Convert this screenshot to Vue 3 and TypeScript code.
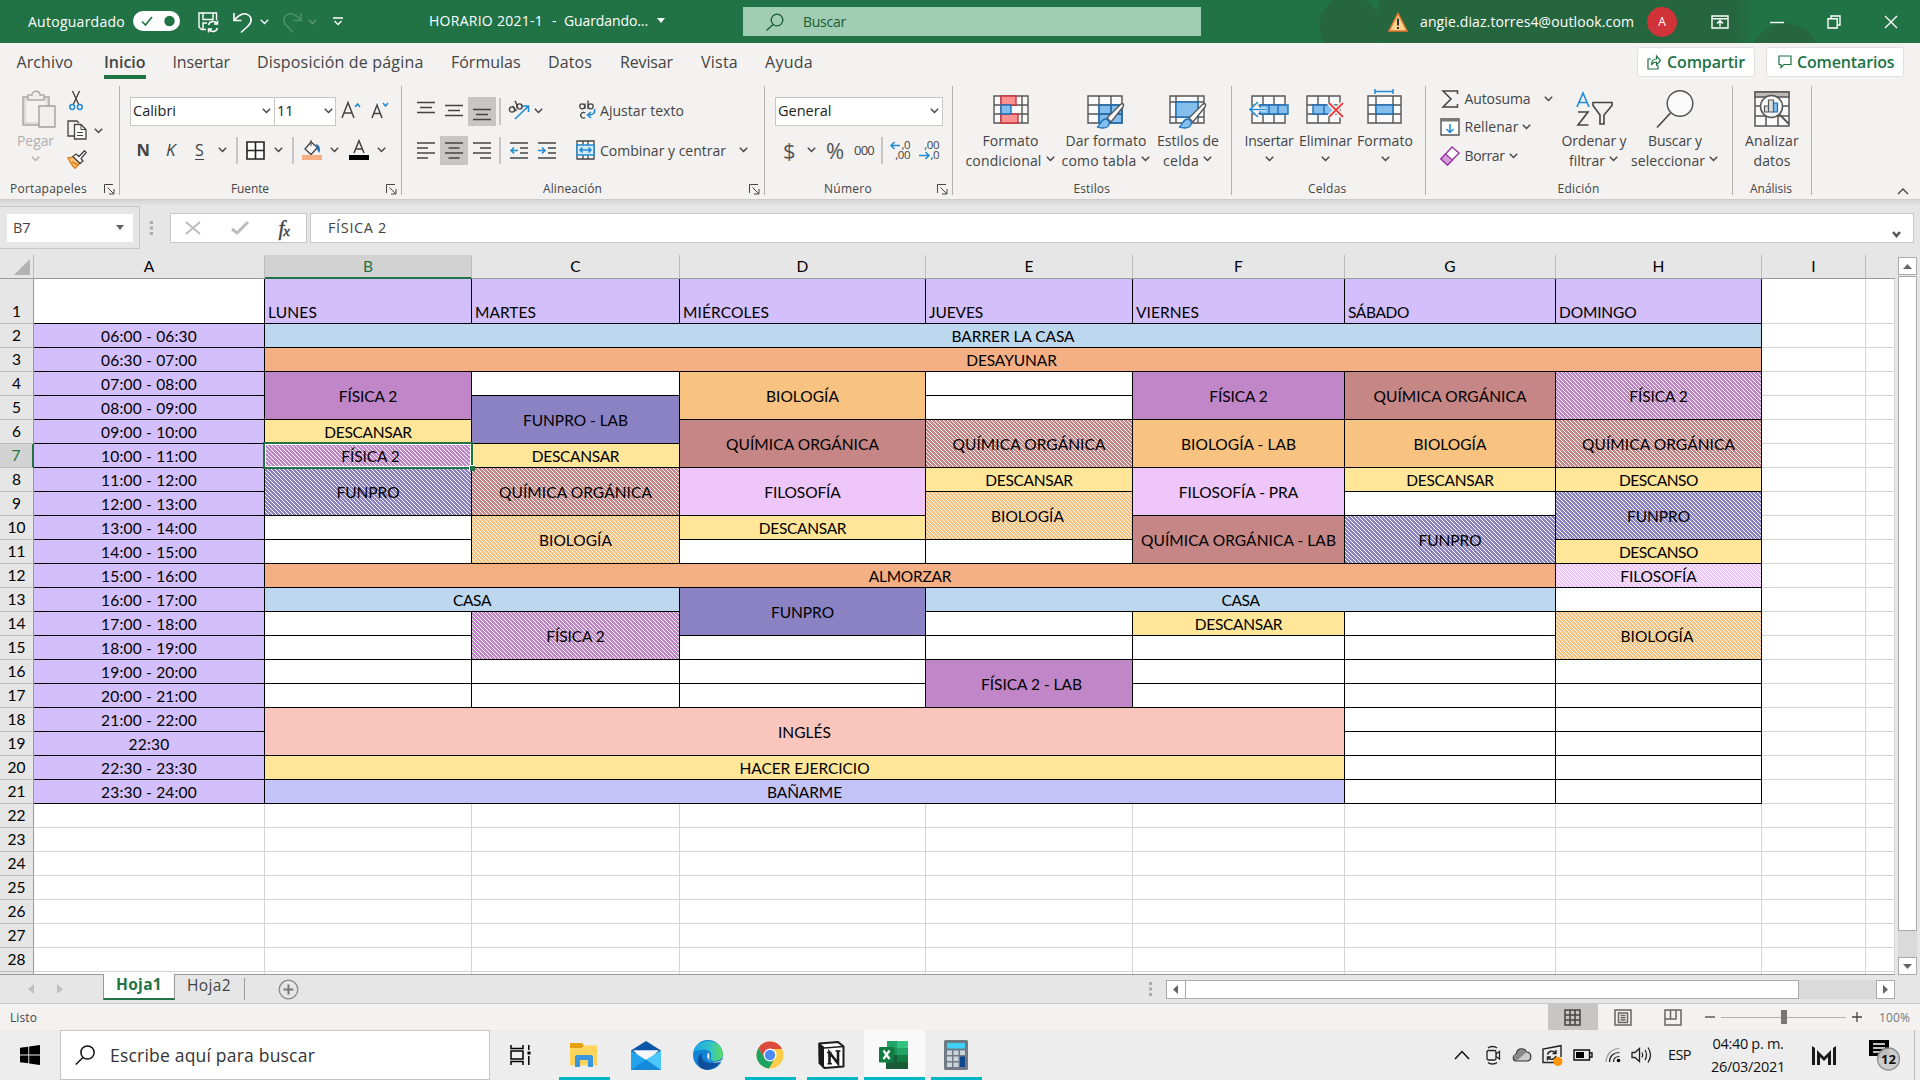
<script setup lang="ts">
import type { Directive } from 'vue'

interface Item {
  x: number
  w: number
  icon?: string
  text?: string
  cls?: string
  combo?: boolean
}
interface Line { h: number; items: Item[] }
interface Block { x: number; w: number; lines?: Line[]; icon?: string; top?: string; low?: string; fitTop?: number; fitLow?: number; chev?: boolean }
interface Group { x: number; w: number; label: string; lx: number; lw: number; launcher?: number; blocks: Block[] }
interface Glyph { w: number; h: number; body: string }

/* Tracks a label so that it takes exactly the given width. */
const vFit: Directive<HTMLElement, number | undefined> = {
  mounted(el, { value }) {
    if (!value || !el.textContent) return
    const range = document.createRange()
    range.selectNodeContents(el)
    const natural = range.getBoundingClientRect().width
    const step = (value - natural) / el.textContent.length
    el.style.letterSpacing = `${step.toFixed(3)}px`
  },
}

/* Turns left edges into the gaps between neighbours of a flex row. */
function lay<T extends { x: number; w: number }>(items: T[], origin: number) {
  let edge = origin
  return items.map((it) => {
    const gap = it.x - edge
    edge = it.x + it.w
    return { ...it, box: { marginLeft: `${gap}px`, width: `${it.w}px` } }
  })
}

const D = 'fill="none" stroke="#444"'
const B = 'fill="none" stroke="#1e8bd4"'
const icons: Record<string, Glyph> = {
  chev: { w: 9, h: 6, body: `<path ${D} stroke-width="1.4" d="M.8 .8l3.7 3.7L8.200 .8"/>` },
  chevw: { w: 9, h: 6, body: '<path fill="none" stroke="#fff" stroke-width="1.3" d="M.8 .8l3.7 3.7L8.200 .8"/>' },
  chevg: { w: 9, h: 6, body: '<path fill="none" stroke="#5b9a77" stroke-width="1.3" d="M.8 .8l3.7 3.7L8.200 .8"/>' },
  chevd: { w: 9, h: 6, body: '<path fill="none" stroke="#b1afad" stroke-width="1.3" d="M.8 .8l3.7 3.7L8.200 .8"/>' },
  caret: { w: 12, h: 8, body: `<path ${D} stroke-width="1.4" d="M1 7l5-5 5 5"/>` },
  launch: { w: 11, h: 11, body: `<path ${D} d="M.5 9V.5H9M3.500 3.500l6 6M10 5v5H5"/>` },
  toggle: { w: 47, h: 20, body: '<rect width="47" height="20" rx="10" fill="#fff"/><path d="M9 10.500l3.500 3.500 6.500-8" fill="none" stroke="#217346" stroke-width="1.700"/><circle cx="36.500" cy="10" r="5.200" fill="#217346"/>' },
  save: { w: 21, h: 21, body: '<path fill="none" stroke="#fff" stroke-width="1.400" d="M8 17.500H3.500L1 15V1h17.500v7M5 1v6.500h10V1M5 17v-6h4"/><path fill="none" stroke="#fff" stroke-width="1.500" d="M10.500 13a4.800 4.800 0 0 1 8.500-1.500M19.500 8.500v3.500H16M19.500 16a4.800 4.800 0 0 1-8.500 1.500M10.500 20.500V17H14"/>' },
  undo: { w: 20, h: 21, body: '<path fill="none" stroke="#fff" stroke-width="1.600" d="M1 1v7.500h7.500M1.500 8C6 2 12 0 16 3.500s2 8-2 11.500l-6 5.500"/>' },
  redo: { w: 20, h: 21, body: '<path fill="none" stroke="#4d9069" stroke-width="1.500" d="M19 1v7.500h-7.500M18.500 8C14 2 8 0 4 3.500s-2 8 2 11.500l5 5.500"/>' },
  qat: { w: 10, h: 9, body: '<path fill="none" stroke="#fff" stroke-width="1.300" d="M0 1h10M1.500 4L5 7.500 8.500 4"/>' },
  tri: { w: 8, h: 5, body: '<path fill="#fff" d="M0 0h8L4 5z"/>' },
  warn: { w: 20, h: 20, body: '<path fill="#fbd28b" stroke="#e8762c" stroke-width="1.500" d="M10 1.500L19 19H1z"/><path stroke="#333" stroke-width="2" d="M10 6.500v7M10 15v2"/>' },
  ribbon: { w: 18, h: 14, body: '<path fill="none" stroke="#fff" stroke-width="1.400" d="M1 1h16v12H1zM1 3.800h16M9 11.500V6M6 8.500l3-3 3 3"/>' },
  min: { w: 14, h: 14, body: '<path stroke="#fff" stroke-width="1.400" d="M0 7.500h14"/>' },
  restore: { w: 14, h: 14, body: '<path fill="none" stroke="#fff" stroke-width="1.400" d="M1 3.800h9.200V13H1zM4 3.500V1h9v9h-2.500"/>' },
  close: { w: 14, h: 14, body: '<path stroke="#fff" stroke-width="1.400" d="M1 1l12 12M13 1L1 13"/>' },
  share: { w: 14, h: 16, body: '<path fill="none" stroke="#217346" stroke-width="1.200" d="M4 5H1v10h10v-4M4.500 11c0-4 2-6 5-6V2l4 4.500-4 4.500V8c-2.500 0-4 1-5 3z"/>' },
  comment: { w: 14, h: 14, body: '<path fill="none" stroke="#217346" stroke-width="1.200" d="M1 1h12v8.500H6L3 12.500v-3H1z"/>' },
  glassg: { w: 18, h: 18, body: '<circle cx="11" cy="7" r="5.800" fill="none" stroke="#185c37" stroke-width="1.300"/><path stroke="#185c37" stroke-width="1.300" d="M7 11.500L.5 17.500"/>' },
  paste: { w: 34, h: 38, body: '<g transform="translate(3 0)"><path fill="#dcdbd9" stroke="#aaa" stroke-width="1.500" d="M1 7h26v28H1z"/><path fill="#f3f2f1" d="M4 10h20v22H4z"/><path fill="#eee" stroke="#aaa" stroke-width="1.300" d="M6 10V5h4c0-5 8-5 8 0h4v5z"/><path fill="#f0efee" stroke="#a0a0a0" stroke-width="1.400" d="M17 16h16v21H17z"/></g>' },
  cut: { w: 14, h: 20, body: `<path ${D} stroke-width="1.400" d="M3.500 0l6 13M10.500 0l-6 13"/><circle ${B} stroke-width="1.500" cx="3.200" cy="16" r="2.400"/><circle ${B} stroke-width="1.500" cx="10.800" cy="16" r="2.400"/>` },
  copy: { w: 20, h: 20, body: `<path ${D} stroke-width="1.300" d="M7 16H1V1h9l2 2"/><path fill="#fafafa" stroke="#444" stroke-width="1.300" d="M7.500 4.500H14l5 5V19H7.500z"/><path ${D} d="M14 4.500v5h5M10 12.500h6M10 15.500h6"/>` },
  brush: { w: 20, h: 19, body: '<path fill="#f9c67b" stroke="#e07b1a" stroke-width="1.400" d="M1 8l5-1 7 6-5 5.300C5 16 3 12 1 8zM5 12l6 3"/><path fill="#fff" stroke="#444" stroke-width="1.300" d="M6 6.500L9 4l3 2.500L17.500 .8l1.700 1.700L14 8.500l2 2.500-3 2.500z"/>' },
  grow: { w: 20, h: 18, body: `<path ${D} stroke-width="1.500" d="M1 17L7 1.500 13 17M3 12h8"/><path ${B} stroke-width="1.500" d="M14 6l2.500-3L19 6"/>` },
  shrink: { w: 19, h: 18, body: `<path ${D} stroke-width="1.500" d="M1 17L6 4l5 13M2.800 12.500h6.500"/><path ${B} stroke-width="1.500" d="M12 2l2.500 3L17 2"/>` },
  vsep: { w: 1, h: 27, body: '<path stroke="#c8c6c4" stroke-width="2" d="M0 0v27"/>' },
  borders: { w: 19, h: 19, body: '<path fill="#fff" stroke="#222" stroke-width="1.600" d="M1 1h17v17H1zM9.500 1v17M1 9.500h17"/>' },
  fill: { w: 20, h: 20, body: `<path fill="#fafafa" stroke="#444" stroke-width="1.300" d="M9 2L3 9l6 5.500L15.500 7.500z"/><path ${D} d="M9 0v6"/><path fill="#1f6fb5" d="M14 4c4 1 4.500 5 3.500 9-1-1-2.500-3-2.500-5z"/><path fill="#f4b084" d="M0 15h20v5H0z"/>` },
  fcolor: { w: 20, h: 20, body: `<path ${D} stroke-width="1.500" d="M5 13L10 .8 15 13M6.500 9h7"/><path d="M0 15h20v5H0z"/>` },
  atop: { w: 18, h: 19, body: `<path ${D} stroke-width="1.500" d="M0 4.500h18M3 9.500h12M0 14.500h18"/>` },
  al: { w: 18, h: 19, body: `<path ${D} stroke-width="1.500" d="M0 2h18M0 7h11M0 12h18M0 17h11"/>` },
  ac: { w: 18, h: 19, body: `<path ${D} stroke-width="1.500" d="M0 2h18M3.500 7h11M0 12h18M3.500 17h11"/>` },
  ar: { w: 18, h: 19, body: `<path ${D} stroke-width="1.500" d="M0 2h18M7 7h11M0 12h18M7 17h11"/>` },
  orient: { w: 21, h: 20, body: `<path ${B} stroke-width="1.600" d="M7 19L20 6.500M14 6h6.500v6"/><g ${D} stroke-width="1.400"><circle cx="4" cy="9.500" r="2.600"/><path d="M4.500 6l4 5"/><circle cx="11.500" cy="6.500" r="2.600"/><path d="M7 .8l3 7"/></g>` },
  wrap: { w: 17, h: 20, body: `<g ${D} stroke-width="1.300"><circle cx="3.200" cy="6.300" r="2.500"/><path d="M6 3.500V9M9 .5V9M6.200 13a2.800 2.800 0 1 0 0 4.500"/><circle cx="11.700" cy="6.300" r="2.500"/></g><path ${B} stroke-width="1.600" d="M15.500 9c1 4-1 6-6.500 6M12 12l-3.500 3 3.500 3"/>` },
  dedent: { w: 18, h: 17, body: `<path ${D} stroke-width="1.500" d="M0 1h18M10 6h8M10 11h8M0 16h18"/><path ${B} stroke-width="1.500" d="M8 8.500H1M4 5.500l-3 3 3 3"/>` },
  indent: { w: 18, h: 17, body: `<path ${D} stroke-width="1.500" d="M0 1h18M10 6h8M10 11h8M0 16h18"/><path ${B} stroke-width="1.500" d="M0 8.500h7M4 5.500l3 3-3 3"/>` },
  merge: { w: 19, h: 20, body: `<path fill="#fafafa" stroke="#444" stroke-width="1.300" d="M1 1h17v18H1zM7 1v4M12 1v4M7 15v4M12 15v4"/><path fill="#d7ebfa" stroke="#1e8bd4" stroke-width="1.500" d="M1 5h17v10H1zM4 10h11M6.500 7.500L4 10l2.500 2.500M12.500 7.500L15 10l-2.500 2.500"/>` },
  decup: { w: 20, h: 20, body: `<path ${B} stroke-width="1.500" d="M10 5.500H1M4.500 2L1 5.500 4.500 9"/>` },
  decdn: { w: 20, h: 20, body: `<path ${B} stroke-width="1.500" d="M0 15.500h10M6.500 12l3.500 3.500L6.500 19"/>` },
  cond: { w: 36, h: 40, body: '<path fill="#fafafa" stroke="#555" stroke-width="1.400" d="M1 7h34v27H1zM1 16h34M1 25h34M8 7v27M29 7v27"/><path fill="#ff9090" stroke="#d13438" stroke-width="1.400" d="M8 7h15v9H8zM8 25h17v9H8z"/><path fill="#83beec" stroke="#1e6fb8" stroke-width="1.400" d="M8 16h10v9H8z"/>' },
  table: { w: 38, h: 40, body: '<path fill="#fafafa" d="M1 7h34v27H1z"/><path fill="#83beec" d="M12 16h24v18H12z"/><path fill="none" stroke="#555" stroke-width="1.400" d="M1 7h34v27H1zM1 16h34M1 25h34M12 7v27M24 7v27"/><path fill="none" stroke="#1e6fb8" stroke-width="1.300" d="M12 16h23v18H12zM12 25h23M24 16v18"/><path fill="#fff" stroke="#555" stroke-width="1.400" d="M20 29L34 15c3-1 3 1 2 3L24 33z"/><path fill="#83beec" stroke="#1e6fb8" stroke-width="1.300" d="M10 38c3 0 3-8 9-8 6 3 3 9-3 9-2 0-4 0-6-1z"/>' },
  style: { w: 38, h: 40, body: '<path fill="#fafafa" stroke="#555" stroke-width="1.400" d="M1 7h34v27H1zM1 13h34M1 28h34M7 7v27M29 7v27"/><path fill="#83beec" stroke="#1e6fb8" stroke-width="1.400" d="M7 13h22v15H7z"/><path fill="#fff" stroke="#555" stroke-width="1.400" d="M20 29L34 15c3-1 3 1 2 3L24 33z"/><path fill="#83beec" stroke="#1e6fb8" stroke-width="1.300" d="M10 38c3 0 3-8 9-8 6 3 3 9-3 9-2 0-4 0-6-1z"/>' },
  insert: { w: 41, h: 40, body: '<path fill="#fafafa" stroke="#555" stroke-width="1.400" d="M3 7h33v27H3zM3 16h33M3 25h33M14 7v27M25 7v27"/><path fill="#83beec" stroke="#1e6fb8" stroke-width="1.400" d="M11 16h28v9H11zM20 16v9M29 16v9"/><path fill="none" stroke="#fff" stroke-width="3.500" d="M17 20.500H3M10 13l-8 7.500 8 7.500"/><path fill="none" stroke="#1e8bd4" stroke-width="1.600" d="M17 20.500H2M9 13l-8 7.500L9 28"/>' },
  remove: { w: 39, h: 40, body: '<path fill="#fafafa" stroke="#555" stroke-width="1.400" d="M1 7h33v27H1zM1 16h33M1 25h33M12 7v27M23 7v27"/><path fill="#83beec" stroke="#1e6fb8" stroke-width="1.400" d="M7 16h21v9H7zM18 16v9"/><path stroke="#f3f2f1" stroke-width="5" d="M23 14l14 14M37 14L23 28"/><path stroke="#e8413f" stroke-width="1.800" d="M23 14l14 14M37 14L23 28"/>' },
  format: { w: 36, h: 40, body: '<path fill="#fafafa" stroke="#555" stroke-width="1.400" d="M1 7h33v27H1zM1 16h33M1 25h33M9 7v27M26 7v27"/><path fill="#83beec" stroke="#1e6fb8" stroke-width="1.400" d="M9 16h17v9H9z"/><path fill="none" stroke="#1e8bd4" stroke-width="1.500" d="M8 2.500h18M8 0v5M26 0v5"/>' },
  sigma: { w: 17, h: 18, body: `<path ${D} stroke-width="1.500" d="M15.500 4V1H1l8 8-8 8h14.500v-3"/>` },
  down: { w: 20, h: 18, body: `<path fill="#fff" stroke="#555" stroke-width="1.400" d="M1 1h18v16H1z"/><path stroke="#777" stroke-width="2" d="M1 2.500h18"/><path ${B} stroke-width="1.500" d="M10 6v8.500M6.500 11l3.500 3.500L13.500 11"/>` },
  eraser: { w: 20, h: 20, body: '<path fill="#fff" stroke="#9a3aa5" stroke-width="1.500" d="M12 1l7 6L7.500 19l-6.500-6z"/><path fill="#d59ddb" stroke="#9a3aa5" stroke-width="1.300" d="M5.500 8l7 6L7.500 19l-6.500-6z"/>' },
  sort: { w: 37, h: 40, body: `<path ${B} stroke-width="1.600" d="M1 18L7 4l6 14M3 13.500h8"/><path ${D} stroke-width="1.600" d="M2 23h10L2 36h10.500M17 13.500h19v3L28 26v9h-4v-9l-7-9.500z"/>` },
  find: { w: 38, h: 40, body: '<circle cx="24" cy="14.500" r="12.800" fill="#fafafa" stroke="#555" stroke-width="1.500"/><path stroke="#444" stroke-width="1.600" d="M14.500 24L1 38.500"/>' },
  analyze: { w: 36, h: 40, body: '<path fill="#fafafa" stroke="#555" stroke-width="1.500" d="M1 3h34v34H1zM1 17h34M1 27h34M12 8v29M24 8v29"/><path fill="#bbb" stroke="#555" stroke-width="1.300" d="M1 3h34v5H1z"/><circle cx="17.500" cy="17.500" r="11" fill="#fafafa" stroke="#555" stroke-width="1.500"/><path stroke="#555" stroke-width="1.800" d="M25 25l10 10"/><path fill="#ddd" stroke="#555" stroke-width="1.200" d="M10.500 17h4v6h-4zM14.500 11h5v12h-5z"/><path fill="#83beec" stroke="#1e6fb8" stroke-width="1.200" d="M19.500 14h4v9h-4z"/>' },
  tril: { w: 6, h: 10, body: '<path fill="#c0c0c0" d="M6 0v10L0 5z"/>' },
  trir: { w: 6, h: 10, body: '<path fill="#c0c0c0" d="M0 0v10l6-5z"/>' },
  dtril: { w: 5, h: 9, body: '<path fill="#666" d="M5 0v9L0 4.500z"/>' },
  dtrir: { w: 5, h: 9, body: '<path fill="#666" d="M0 0v9l5-4.500z"/>' },
  dtriu: { w: 9, h: 5, body: '<path fill="#666" d="M0 5h9L4.500 0z"/>' },
  dtrid: { w: 9, h: 5, body: '<path fill="#666" d="M0 0h9L4.500 5z"/>' },
  add: { w: 21, h: 21, body: '<circle cx="10.500" cy="10.500" r="9.300" fill="none" stroke="#888" stroke-width="1.300"/><path stroke="#777" stroke-width="2" d="M10.500 5.500v10M5.500 10.500h10"/>' },
  dots: { w: 3, h: 14, body: '<path fill="#aaa" d="M0 0h3v3H0zM0 5.500h3v3H0zM0 11h3v3H0z"/>' },
  vnorm: { w: 17, h: 17, body: '<path fill="none" stroke="#444" stroke-width="1.500" d="M1 1h15v15H1zM1 6h15M1 11h15M6 1v15M11 1v15"/>' },
  vpage: { w: 18, h: 17, body: '<path fill="none" stroke="#666" stroke-width="1.500" d="M1 1h16v15H1zM4.500 4h9v9.500h-9zM6.500 6.500h5M6.500 8.800h5M6.500 11h5"/>' },
  vbreak: { w: 18, h: 17, body: '<path fill="none" stroke="#666" stroke-width="1.500" d="M1 1h16v15H1zM1 10h11V1M6.500 1v9"/>' },
  minus: { w: 10, h: 10, body: `<path ${D} stroke-width="1.300" d="M0 5h10"/>` },
  plus: { w: 10, h: 10, body: `<path ${D} stroke-width="1.300" d="M0 5h10M5 0v10"/>` },
  slider: { w: 125, h: 14, body: '<path stroke="#b0b0b0" d="M0 7.500h125"/><path fill="#777" d="M60 0h6v14h-6z"/>' },
  win: { w: 20, h: 20, body: '<path d="M0 2.800L8.300 1.700v7.900H0zM9.200 1.600L20 0v9.600H9.200zM0 10.400h8.300v7.900L0 17.200zM9.200 10.400H20V20L9.200 18.400z"/>' },
  glass: { w: 20, h: 20, body: '<circle cx="12.500" cy="7.500" r="6.600" fill="none" stroke="#111" stroke-width="1.500"/><path stroke="#111" stroke-width="1.500" d="M8 12.500L.8 19.500"/>' },
  taskview: { w: 21, h: 20, body: '<path fill="none" stroke="#000" stroke-width="1.500" d="M1 0v3.500h12V0M1 6h12v8H1zM1 20v-3.500h12V20M18.800 0v5M18.800 11v9"/><path d="M17.500 6.500h3v3h-3z"/>' },
  explorer: { w: 28, h: 24, body: '<path fill="#e5a00d" d="M0 0h12l2 2.500L12 5H0z"/><path fill="#ffd35c" d="M0 5h12l2-2.500h13V22.500H0z"/><path fill="#3a96dd" d="M5 14q0-2 2-2h14q2 0 2 2v10h-5v-7h-8v7H5z"/>' },
  mail: { w: 30, h: 29, body: '<path fill="#0a57a8" d="M0 9.500L15 0l15 9.500v3H0z"/><path fill="#f4f6f8" d="M2 9.500h26L15 20z"/><path fill="#22a5ec" d="M0 9.500L15 19 30 9.500V29H0z"/><path fill="#4cc8f8" d="M30 9.500L15 19l15 10z"/><path fill="#1380d6" d="M0 29l15-10.500L30 29z" opacity=".75"/><path fill="#f4f6f8" d="M3 9.500h24L15 18z"/>' },
  edge: { w: 30, h: 30, body: '<defs><linearGradient id="eg"><stop offset="0" stop-color="#1ba3e8"/><stop offset=".55" stop-color="#2fc4c8"/><stop offset="1" stop-color="#62dd5a"/></linearGradient></defs><circle cx="15" cy="15" r="15" fill="#1283d4"/><path fill="url(#eg)" d="M.5 12C3-2 28-4 30 14c0 5-4 7-9 7-3 0-4-2-3-4 2-6-5-9-10-7-4 0-6 1-7.500 2z"/><path fill="#104f9c" d="M9 13c-2 9 8 14 19 7-4 9-14 12-20 8-5-5-4-12 1-15z"/><path fill="#ededed" d="M15.500 12.500c-3 3-1 9 5.500 9.500 4 0 6-1 8-2l1.500-2v3l-2 .5c-4 2-10 1-12-1.500-1-2 1-4-1-7.500z"/>' },
  chrome: { w: 28, h: 28, body: '<circle cx="14" cy="14" r="13.500" fill="#ffcd46"/><path fill="#dd4b3e" d="M2.300 7.200A13.500 13.500 0 0 1 26 8H14L8.500 17.500z"/><path fill="#1da362" d="M2.300 7.200A13.500 13.500 0 0 0 13 27.500L19 17l-10.500 0z"/><circle cx="14" cy="14" r="6.500" fill="#fff"/><circle cx="14" cy="14" r="5.200" fill="#4c8bf5"/>' },
  notion: { w: 27, h: 28, body: '<path fill="#fff" stroke="#1b1b1b" stroke-width="2" stroke-linejoin="round" d="M1.200 2.500L20 1l5.500 4.500v20L6.500 27l-5-5z"/><path fill="#1b1b1b" d="M1.200 2.500L6 7v20l-4.800-5z"/><path fill="none" stroke="#1b1b1b" stroke-width="1.500" d="M1.500 3L6.500 7l19-1.500"/><path fill="none" stroke="#1b1b1b" stroke-width="2.600" d="M11.500 23V11.500L20 22.500V9.500"/><path stroke="#1b1b1b" stroke-width="1.400" d="M9 11.500h4.500M9.500 22.800h4.500M17.500 10h5"/>' },
  excel: { w: 29, h: 28, body: '<path fill="#21a366" d="M8 0h10v7H8z"/><path fill="#33c481" d="M18 0h11v7H18z"/><path fill="#107c41" d="M8 14h21v7H8z"/><path fill="#21a366" d="M18 7h11v7H18z"/><path fill="#1a9256" d="M8 7h10v7H8z"/><path fill="#185c37" d="M7 21h22v7H7zM7 14h11v7H7z"/><rect y="6" width="15" height="15.500" rx="1.200" fill="#107c41"/><path stroke="#fff" stroke-width="2.200" d="M4.500 9.500l6 8.500M10.500 9.500l-6 8.500"/>' },
  calc: { w: 24, h: 30, body: '<rect width="24" height="30" rx="1.500" fill="#6f7a85"/><path fill="#3fd0f8" d="M3 3h18v5.500H3z"/><path fill="#ccd3da" d="M3 10.500h5v4.500H3zM9.500 10.500h5v4.500h-5zM16 10.500h5v4.500h-5zM3 16.500h5V21H3zM9.500 16.500h5V21h-5zM3 22.500h5V27H3zM9.500 22.500h5V27h-5z"/><path fill="#10488f" d="M16 16.500h5V27h-5z"/>' },
  up: { w: 16, h: 10, body: '<path fill="none" stroke="#111" stroke-width="1.500" d="M1 9l7-7.500L15 9"/>' },
  cam: { w: 15, h: 18, body: '<rect x="1" y="4.500" width="9" height="9.500" rx="1.500" fill="none" stroke="#222" stroke-width="1.300"/><path fill="none" stroke="#222" stroke-width="1.300" d="M10 8l3.500-2.500v7.500L10 10.500M2 2c2-2 7-2 9 0M2 16.500c2 2 7 2 9 0"/>' },
  cloud: { w: 20, h: 14, body: '<path fill="#ccc" stroke="#333" stroke-width="1.200" d="M4.500 13C.5 13 0 7.500 4 6.500 5-.5 13-.5 14.500 4c5 0 6 8 1 9z"/><path fill="#888" d="M1.500 9C1 7 3 6.500 4.500 6.500 6 0 13 0 14 4.500L5 12.500C3 13 1.500 11 1.500 9z"/>' },
  update: { w: 21, h: 21, body: '<path fill="none" stroke="#222" stroke-width="1.400" d="M12 17.500H1V4l18-3.300V12"/><path fill="none" stroke="#222" stroke-width="1.400" d="M5.500 9.500a4.500 4.500 0 0 1 8-1.500M14 5v3.500h-3.500M14 11a4.500 4.500 0 0 1-8 1.500M5.500 15.500V12H9"/><circle cx="16" cy="16.500" r="4.500" fill="#ff9500"/>' },
  battery: { w: 20, h: 12, body: '<path fill="none" stroke="#111" stroke-width="1.400" d="M1 1h15.500v10H1zM17 4h2v4h-2"/><path d="M3 3h8v6H3z"/>' },
  wifi: { w: 16, h: 17, body: '<path fill="none" stroke="#999" stroke-width="1.200" d="M1 15C1.500 7 7 1.500 14.500 1.500"/><path fill="none" stroke="#222" stroke-width="1.200" d="M4.500 15c0-6 4-9.500 10-9.500M8.500 15c0-3.500 2.500-5.500 6-5.500"/><circle cx="13.500" cy="13.500" r="1.800"/>' },
  volume: { w: 21, h: 18, body: '<path fill="none" stroke="#222" stroke-width="1.300" d="M1 6.500h3L8.500 2.500v13L4 11.500H1zM11 6.500q1.500 2.500 0 5M14 4q3 5 0 10M17 1.500q5 7.500 0 15"/>' },
  mm: { w: 24, h: 19, body: '<path fill="#1a1a1a" d="M0 0l3 2v17H0zM24 0l-3 2v17h3zM5 4l7 7 7-7v15h-3v-8l-4 4-4-4v8H5z"/>' },
  notif: { w: 32, h: 30, body: '<path d="M0 0h20v16h-7l-4 4v-4H0z"/><path stroke="#fff" stroke-width="1.500" d="M4 4h12M4 8h12M4 12h8"/><circle cx="19.500" cy="19" r="11" fill="#ccc" stroke="#888" stroke-width="1.300" opacity=".93"/>' },
}

const title = lay<Item>([
  { x: 28, w: 97, text: 'Autoguardado', cls: 'wt' },
  { x: 133, w: 47, icon: 'toggle', cls: 'up1' },
  { x: 198, w: 21, icon: 'save', cls: 'dn2' },
  { x: 233, w: 20, icon: 'undo', cls: 'dn2' },
  { x: 260, w: 9, icon: 'chevw' },
  { x: 282, w: 20, icon: 'redo', cls: 'dn2' },
  { x: 308, w: 9, icon: 'chevg' },
  { x: 333, w: 10, icon: 'qat' },
  { x: 429, w: 114, text: 'HORARIO 2021-1', cls: 'wt up2' },
  { x: 552, w: 5, text: '-', cls: 'wt up2' },
  { x: 564, w: 84, text: 'Guardando...', cls: 'wt up2' },
  { x: 657, w: 8, icon: 'tri', cls: 'up2' },
], 0)
const account = lay<Item>([
  { x: 1388, w: 20, icon: 'warn' },
  { x: 1420, w: 214, text: 'angie.diaz.torres4@outlook.com', cls: 'wt' },
], 1201)
const windowKeys = lay<Item>([
  { x: 1711, w: 18, icon: 'ribbon' },
  { x: 1770, w: 14, icon: 'min' },
  { x: 1827, w: 14, icon: 'restore' },
  { x: 1884, w: 14, icon: 'close' },
], 1677)

const tabs = lay([
  { x: 16.500, w: 56.500, text: 'Archivo' },
  { x: 104, w: 41.500, text: 'Inicio', current: true },
  { x: 172.500, w: 57.500, text: 'Insertar' },
  { x: 257, w: 166.500, text: 'Disposición de página' },
  { x: 451, w: 69.500, text: 'Fórmulas' },
  { x: 548, w: 44, text: 'Datos' },
  { x: 620, w: 53, text: 'Revisar' },
  { x: 701, w: 37, text: 'Vista' },
  { x: 765, w: 48, text: 'Ayuda' },
] as { x: number; w: number; text: string; current?: boolean }[], 0)

const c = (x: number, icon = 'chev'): Item => ({ x: x - 4.500, w: 9, icon })
const sep = (x: number): Item => ({ x, w: 1, icon: 'vsep' })

const rawGroups: Group[] = [
  {
    x: 0, w: 120, label: 'Portapapeles', lx: 10, lw: 77, launcher: 104,
    blocks: [
      { x: 16, w: 39, icon: 'paste', top: 'Pegar', fitTop: 37, chev: true },
      {
        x: 60, w: 50, lines: [
          { h: 30, items: [{ x: 69, w: 14, icon: 'cut' }] },
          { h: 29, items: [{ x: 66.500, w: 20, icon: 'copy', cls: 'up1' }, c(98.500)] },
          { h: 29, items: [{ x: 66.500, w: 20, icon: 'brush' }] },
        ],
      },
    ],
  },
  {
    x: 120, w: 282, label: 'Fuente', lx: 231, lw: 38, launcher: 386,
    blocks: [{
      x: 120, w: 280, lines: [
        { h: 50, items: [{ x: 130, w: 145, text: 'Calibri', combo: true, cls: 'c1' }, { x: 274, w: 62, text: '11', combo: true, cls: 'c2' }, { x: 341, w: 20, icon: 'grow', cls: 'up2' }, { x: 371, w: 19, icon: 'shrink', cls: 'up2' }] },
        { h: 28, items: [{ x: 136.500, w: 13, text: 'N', cls: 'bi' }, { x: 166, w: 11, text: 'K', cls: 'it' }, { x: 195, w: 9, text: 'S', cls: 'un' }, c(222.500), sep(237), { x: 246, w: 19, icon: 'borders' }, c(278), sep(293), { x: 302, w: 20, icon: 'fill' }, c(334), { x: 349, w: 20, icon: 'fcolor' }, c(381)] },
      ],
    }],
  },
  {
    x: 402, w: 363, label: 'Alineación', lx: 543, lw: 59, launcher: 749,
    blocks: [
      {
        x: 402, w: 163, lines: [
          { h: 50, items: [{ x: 417, w: 18, icon: 'atop', cls: 'up8' }, { x: 445, w: 18, icon: 'atop', cls: 'up2' }, { x: 468, w: 28, icon: 'atop', cls: 'on low' }, sep(500), { x: 508, w: 21, icon: 'orient', cls: 'up2' }, c(538)] },
          { h: 28, items: [{ x: 417, w: 18, icon: 'al' }, { x: 440, w: 28, icon: 'ac', cls: 'on' }, { x: 473, w: 18, icon: 'ar' }, sep(500), { x: 510, w: 18, icon: 'dedent' }, { x: 538, w: 18, icon: 'indent' }] },
        ],
      },
      {
        x: 566, w: 190, lines: [
          { h: 50, items: [{ x: 579, w: 17, icon: 'wrap', cls: 'up2' }, { x: 600, w: 84, text: 'Ajustar texto' }] },
          { h: 28, items: [{ x: 576, w: 19, icon: 'merge' }, { x: 600, w: 126, text: 'Combinar y centrar', cls: 'dn1' }, c(743)] },
        ],
      },
    ],
  },
  {
    x: 765, w: 188, label: 'Número', lx: 824, lw: 48, launcher: 937,
    blocks: [{
      x: 765, w: 186, lines: [
        { h: 50, items: [{ x: 775, w: 168, text: 'General', combo: true, cls: 'c3' }] },
        { h: 28, items: [{ x: 783, w: 10, text: '$', cls: 'sym' }, c(811.500), { x: 826, w: 20, text: '%', cls: 'sym' }, { x: 854, w: 20, text: '000', cls: 'zero' }, sep(882), { x: 890, w: 20, icon: 'decup', text: ',0\n,00', cls: 'dec' }, { x: 919, w: 20, icon: 'decdn', text: ',00\n,0', cls: 'dec' }] },
      ],
    }],
  },
  {
    x: 953, w: 279, label: 'Estilos', lx: 1073.500, lw: 36.500,
    blocks: [
      { x: 960, w: 101, icon: 'cond', top: 'Formato', low: 'condicional', fitTop: 56, fitLow: 76, chev: true },
      { x: 1061, w: 90, icon: 'table', top: 'Dar formato', low: 'como tabla', fitTop: 81, fitLow: 75, chev: true },
      { x: 1151, w: 74, icon: 'style', top: 'Estilos de', low: 'celda', fitTop: 62, fitLow: 36, chev: true },
    ],
  },
  {
    x: 1232, w: 194, label: 'Celdas', lx: 1308, lw: 38.500,
    blocks: [
      { x: 1242, w: 54, icon: 'insert', top: 'Insertar', fitTop: 49, chev: true },
      { x: 1297, w: 57, icon: 'remove', top: 'Eliminar', fitTop: 53, chev: true },
      { x: 1355, w: 60, icon: 'format', top: 'Formato', fitTop: 56, chev: true },
    ],
  },
  {
    x: 1426, w: 307, label: 'Edición', lx: 1557.500, lw: 42,
    blocks: [
      {
        x: 1430, w: 125, lines: [
          { h: 26, items: [{ x: 1442, w: 17, icon: 'sigma', cls: 'up1' }, { x: 1464.500, w: 66, text: 'Autosuma', cls: 'up1' }, c(1548)] },
          { h: 29, items: [{ x: 1440, w: 20, icon: 'down' }, { x: 1464.500, w: 54, text: 'Rellenar' }, c(1526.500)] },
          { h: 29, items: [{ x: 1440, w: 20, icon: 'eraser' }, { x: 1464.500, w: 40, text: 'Borrar' }, c(1513.500)] },
        ],
      },
      { x: 1556, w: 76, icon: 'sort', top: 'Ordenar y', low: 'filtrar', fitTop: 65, fitLow: 36, chev: true },
      { x: 1629, w: 92, icon: 'find', top: 'Buscar y', low: 'seleccionar', fitTop: 54, fitLow: 74, chev: true },
    ],
  },
  {
    x: 1733, w: 79, label: 'Análisis', lx: 1750, lw: 42,
    blocks: [{ x: 1740, w: 64, icon: 'analyze', top: 'Analizar', low: 'datos', fitTop: 54, fitLow: 37 }],
  },
]
const groups = rawGroups.map((g) => ({
  ...g,
  size: { width: `${g.w}px` },
  blocks: lay(g.blocks, g.x).map((b) => ({
    ...b,
    lines: b.lines?.map((l) => ({ size: { height: `${l.h}px` }, items: lay(l.items, b.x) })),
  })),
  foot: lay<Item>([
    { x: g.lx, w: g.lw, text: g.label },
    ...(g.launcher ? [{ x: g.launcher, w: 11, icon: 'launch' }] : []),
  ], g.x),
}))

/* Worksheet */
type CellDef = [row: number, col: number, rows: number, cols: number, text: string, kind: string]
const cols = ['A', 'B', 'C', 'D', 'E', 'F', 'G', 'H', 'I', '']
const hours = ['06:00 - 06:30', '06:30 - 07:00', '07:00 - 08:00', '08:00 - 09:00', '09:00 - 10:00', '10:00 - 11:00', '11:00 - 12:00', '12:00 - 13:00', '13:00 - 14:00', '14:00 - 15:00', '15:00 - 16:00', '16:00 - 17:00', '17:00 - 18:00', '18:00 - 19:00', '19:00 - 20:00', '20:00 - 21:00', '21:00 - 22:00', '22:30', '22:30 - 23:30', '23:30 - 24:00']
const days = ['LUNES', 'MARTES', 'MIÉRCOLES', 'JUEVES', 'VIERNES', 'SÁBADO', 'DOMINGO']
const defs: CellDef[] = [
  ...days.map((d, i): CellDef => [1, i + 2, 1, 1, d, 'lilac day']),
  ...hours.map((t, i): CellDef => [i + 2, 1, 1, 1, t, 'lilac']),
  [2, 2, 1, 7, 'BARRER LA CASA', 'sky'],
  [3, 2, 1, 7, 'DESAYUNAR', 'orange trail'],
  [4, 2, 2, 1, 'FÍSICA 2', 'violet'],
  [6, 2, 1, 1, 'DESCANSAR', 'yellow'],
  [7, 2, 1, 1, 'FÍSICA 2', 'violet hatch lead'],
  [8, 2, 2, 1, 'FUNPRO', 'indigo hatch'],
  [5, 3, 2, 1, 'FUNPRO - LAB', 'indigo'],
  [7, 3, 1, 1, 'DESCANSAR', 'yellow'],
  [8, 3, 2, 1, 'QUÍMICA ORGÁNICA', 'rose hatch'],
  [10, 3, 2, 1, 'BIOLOGÍA', 'amber hatch'],
  [4, 4, 2, 1, 'BIOLOGÍA', 'amber'],
  [6, 4, 2, 1, 'QUÍMICA ORGÁNICA', 'rose'],
  [8, 4, 2, 1, 'FILOSOFÍA', 'pink'],
  [10, 4, 1, 1, 'DESCANSAR', 'yellow'],
  [6, 5, 2, 1, 'QUÍMICA ORGÁNICA', 'rose hatch'],
  [8, 5, 1, 1, 'DESCANSAR', 'yellow'],
  [9, 5, 2, 1, 'BIOLOGÍA', 'amber hatch trail'],
  [4, 6, 2, 1, 'FÍSICA 2', 'violet'],
  [6, 6, 2, 1, 'BIOLOGÍA - LAB', 'amber'],
  [8, 6, 2, 1, 'FILOSOFÍA - PRA', 'pink'],
  [10, 6, 2, 1, 'QUÍMICA ORGÁNICA - LAB', 'rose'],
  [4, 7, 2, 1, 'QUÍMICA ORGÁNICA', 'rose'],
  [6, 7, 2, 1, 'BIOLOGÍA', 'amber'],
  [8, 7, 1, 1, 'DESCANSAR', 'yellow'],
  [10, 7, 2, 1, 'FUNPRO', 'indigo hatch'],
  [4, 8, 2, 1, 'FÍSICA 2', 'violet hatch'],
  [6, 8, 2, 1, 'QUÍMICA ORGÁNICA', 'rose hatch'],
  [8, 8, 1, 1, 'DESCANSO', 'yellow'],
  [9, 8, 2, 1, 'FUNPRO', 'indigo hatch'],
  [11, 8, 1, 1, 'DESCANSO', 'yellow'],
  [12, 2, 1, 6, 'ALMORZAR', 'orange'],
  [12, 8, 1, 1, 'FILOSOFÍA', 'pink hatch'],
  [13, 2, 1, 2, 'CASA', 'sky'],
  [13, 4, 2, 1, 'FUNPRO', 'indigo'],
  [13, 5, 1, 3, 'CASA', 'sky'],
  [14, 3, 2, 1, 'FÍSICA 2', 'violet hatch'],
  [14, 6, 1, 1, 'DESCANSAR', 'yellow'],
  [14, 8, 2, 1, 'BIOLOGÍA', 'amber hatch trail'],
  [16, 5, 2, 1, 'FÍSICA 2 - LAB', 'violet lead'],
  [18, 2, 2, 5, 'INGLÉS', 'coral'],
  [20, 2, 1, 5, 'HACER EJERCICIO', 'yellow'],
  [21, 2, 1, 5, 'BAÑARME', 'peri'],
]
const taken = new Set<string>()
for (const [r, k, rs, cs] of defs) {
  for (let i = 0; i < rs; i++) for (let j = 0; j < cs; j++) taken.add(`${r + i}:${k + j}`)
}
const widths: Record<string, number> = {
  'FÍSICA 2': 58.500, DESCANSAR: 87.500, 'QUÍMICA ORGÁNICA': 153, BIOLOGÍA: 73, FUNPRO: 63, FILOSOFÍA: 76.500, DESCANSO: 79,
  'FUNPRO - LAB': 105, 'BIOLOGÍA - LAB': 115, 'FILOSOFÍA - PRA': 119.500, 'QUÍMICA ORGÁNICA - LAB': 195, 'BARRER LA CASA': 123,
  DESAYUNAR: 90.500, ALMORZAR: 82.500, CASA: 38, INGLÉS: 53, 'HACER EJERCICIO': 130, BAÑARME: 75, 'FÍSICA 2 - LAB': 101,
  LUNES: 49, MARTES: 61, MIÉRCOLES: 86, JUEVES: 54, VIERNES: 63, SÁBADO: 61, DOMINGO: 77.500, '22:30': 41,
}
const place = (r: number, k: number, rs = 1, cs = 1) => ({ gridArea: `${r + 1} / ${k + 1} / span ${rs} / span ${cs}` })
const cells = defs.map(([r, k, rs, cs, text, kind]) => ({ text, kind, fit: widths[text] ?? 96, style: place(r, k, rs, cs) }))
for (let r = 1; r <= 29; r++) {
  for (let k = 1; k <= 10; k++) {
    if (taken.has(`${r}:${k}`)) continue
    const framed = r <= 21 && k <= 8
    cells.push({ text: '', kind: framed ? 'blank' : r === 29 ? 'plain cut' : 'plain', fit: 0, style: place(r, k) })
  }
}

const sheetBar = lay<Item>([
  { x: 28, w: 6, icon: 'tril' },
  { x: 57, w: 6, icon: 'trir' },
], 0)
const hscroll = lay<Item>([
  { x: 278, w: 21, icon: 'add' },
  { x: 1149, w: 3, icon: 'dots' },
  { x: 1166, w: 20, icon: 'dtril', cls: 'sb' },
  { x: 1185, w: 614, cls: 'sb' },
  { x: 1799, w: 77, cls: 'track' },
  { x: 1876, w: 19, icon: 'dtrir', cls: 'sb' },
], 245)
const status = lay<Item>([
  { x: 10, w: 27, text: 'Listo', cls: 'dn2' },
  { x: 1548, w: 50, icon: 'vnorm', cls: 'view' },
  { x: 1614, w: 18, icon: 'vpage' },
  { x: 1664, w: 18, icon: 'vbreak' },
  { x: 1705, w: 10, icon: 'minus' },
  { x: 1721, w: 125, icon: 'slider' },
  { x: 1852, w: 10, icon: 'plus' },
  { x: 1879, w: 31, text: '100%', cls: 'gray dn2' },
], 0)
const apps = lay<Item>([
  { x: 508, w: 26, icon: 'taskview' },
  { x: 559, w: 51, icon: 'explorer', cls: 'run' },
  { x: 621, w: 51, icon: 'mail' },
  { x: 683, w: 51, icon: 'edge' },
  { x: 745, w: 51, icon: 'chrome', cls: 'run' },
  { x: 807, w: 51, icon: 'notion', cls: 'run' },
  { x: 864, w: 61, icon: 'excel', cls: 'run active' },
  { x: 931, w: 51, icon: 'calc', cls: 'run' },
], 490)
const tray = lay<Item>([
  { x: 1454, w: 16, icon: 'up' },
  { x: 1486, w: 15, icon: 'cam' },
  { x: 1512, w: 20, icon: 'cloud' },
  { x: 1542, w: 21, icon: 'update' },
  { x: 1573, w: 20, icon: 'battery' },
  { x: 1605, w: 16, icon: 'wifi' },
  { x: 1631, w: 21, icon: 'volume' },
  { x: 1668, w: 23, text: 'ESP', cls: 'esp' },
], 982)
</script>

<template>
  <div class="screen">
    <header class="title">
      <div v-for="(it, i) in title" :key="i" class="item" :class="it.cls" :style="it.box">
        <svg v-if="it.icon" :width="icons[it.icon].w" :height="icons[it.icon].h" v-html="icons[it.icon].body" />
        <span v-else v-fit="it.w">{{ it.text }}</span>
      </div>
      <div class="search">
        <svg width="18" height="18" v-html="icons.glassg.body" />
        <span v-fit="43">Buscar</span>
      </div>
      <div v-for="(it, i) in account" :key="i" class="item" :class="it.cls" :style="it.box">
        <svg v-if="it.icon" :width="icons[it.icon].w" :height="icons[it.icon].h" v-html="icons[it.icon].body" />
        <span v-else v-fit="it.w">{{ it.text }}</span>
      </div>
      <div class="avatar">A</div>
      <div v-for="(it, i) in windowKeys" :key="i" class="item" :style="it.box">
        <svg :width="icons[it.icon!].w" :height="icons[it.icon!].h" v-html="icons[it.icon!].body" />
      </div>
    </header>

    <nav class="tabs">
      <div v-for="t in tabs" :key="t.text" class="tab" :class="{ current: t.current }" :style="t.box"><span v-fit="t.w">{{ t.text }}</span></div>
      <div class="pill share"><svg width="14" height="16" v-html="icons.share.body" /><span v-fit="78">Compartir</span></div>
      <div class="pill"><svg width="14" height="14" v-html="icons.comment.body" /><span v-fit="97.500">Comentarios</span></div>
    </nav>

    <section class="ribbon">
      <div v-for="g in groups" :key="g.label" class="group" :style="g.size">
        <div class="body">
          <div v-for="(b, i) in g.blocks" :key="i" :style="b.box" :class="b.lines ? 'stack' : 'big'">
            <template v-if="b.lines">
              <div v-for="(l, j) in b.lines" :key="j" class="line" :style="l.size">
                <div v-for="(it, k) in l.items" :key="k" class="item" :class="[it.cls, { combo: it.combo }]" :style="it.box">
                  <template v-if="it.combo"><span>{{ it.text }}</span><svg width="9" height="6" v-html="icons.chev.body" /></template>
                  <template v-else>
                    <svg v-if="it.icon" :width="icons[it.icon].w" :height="icons[it.icon].h" v-html="icons[it.icon].body" />
                    <span v-if="it.text" v-fit="it.icon ? undefined : it.w">{{ it.text }}</span>
                  </template>
                </div>
              </div>
            </template>
            <template v-else>
              <div class="pic"><svg :width="icons[b.icon!].w" :height="icons[b.icon!].h" v-html="icons[b.icon!].body" /></div>
              <div class="cap" :class="{ off: b.icon === 'paste' }"><span v-fit="b.fitTop">{{ b.top }}</span></div>
              <div class="cap">
                <span v-if="b.low" v-fit="b.fitLow">{{ b.low }}</span>
                <svg v-if="b.chev" class="cv" :class="{ gap: b.low }" width="9" height="6" v-html="icons[b.icon === 'paste' ? 'chevd' : 'chev'].body" />
              </div>
            </template>
          </div>
        </div>
        <div class="foot">
          <div v-for="(it, i) in g.foot" :key="i" class="item" :style="it.box">
            <svg v-if="it.icon" width="11" height="11" v-html="icons.launch.body" />
            <span v-else v-fit="it.w">{{ it.text }}</span>
          </div>
        </div>
      </div>
      <div class="collapse"><svg width="12" height="8" v-html="icons.caret.body" /></div>
    </section>

    <section class="formula">
      <div class="namebox"><div class="name"><span>B7</span><svg width="8" height="5"><path fill="#666" d="M0 0h8L4 5z" /></svg></div></div>
      <svg class="fdots" width="3" height="14" v-html="icons.dots.body" />
      <div class="keys">
        <svg width="16" height="14"><path stroke="#bcbcbc" stroke-width="2" d="M1 1l14 12M15 1L1 13" /></svg>
        <svg width="18" height="14"><path fill="none" stroke="#bcbcbc" stroke-width="3" d="M1 8l5 4L17 1" /></svg>
        <span class="fx">f<sub>x</sub></span>
      </div>
      <div class="input"><span v-fit="59">FÍSICA 2</span><svg width="9" height="7"><path fill="none" stroke="#555" stroke-width="2.500" d="M1 1l3.500 4L8 1" /></svg></div>
    </section>

    <section class="work">
      <div class="grid">
        <div class="corner" />
        <div v-for="(n, i) in cols" :key="'c' + i" class="colh" :class="{ sel: n === 'B', last: i === 9 }">{{ n }}</div>
        <div v-for="r in 28" :key="'r' + r" class="rowh" :class="{ sel: r === 7 }" :style="place(r, 0)"><span>{{ r }}</span></div>
        <div class="rowh cut" :style="place(29, 0)" />
        <div v-for="(x, i) in cells" :key="i" class="cell" :class="x.kind" :style="x.style"><span v-if="x.text" v-fit="x.fit">{{ x.text }}</span></div>
        <div class="cursor" :style="place(7, 2)"><i /></div>
      </div>
      <div class="vscroll">
        <div class="vb"><svg width="9" height="5" v-html="icons.dtriu.body" /></div>
        <div class="vthumb" />
        <div class="vtrack" />
        <div class="vb"><svg width="9" height="5" v-html="icons.dtrid.body" /></div>
      </div>
    </section>

    <section class="sheets">
      <div v-for="(it, i) in sheetBar" :key="i" class="item" :style="it.box"><svg width="6" height="10" v-html="icons[it.icon!].body" /></div>
      <div class="sheet open"><span v-fit="46">Hoja1</span></div>
      <div class="sheet"><span v-fit="44">Hoja2</span></div>
      <div v-for="(it, i) in hscroll" :key="'h' + i" class="item" :class="it.cls" :style="it.box">
        <svg v-if="it.icon" :width="icons[it.icon].w" :height="icons[it.icon].h" v-html="icons[it.icon].body" />
      </div>
    </section>

    <section class="status">
      <div v-for="(it, i) in status" :key="i" class="item" :class="it.cls" :style="it.box">
        <svg v-if="it.icon" :width="icons[it.icon].w" :height="icons[it.icon].h" v-html="icons[it.icon].body" />
        <span v-else v-fit="it.w">{{ it.text }}</span>
      </div>
    </section>

    <footer class="taskbar">
      <div class="start"><svg width="20" height="20" v-html="icons.win.body" /></div>
      <div class="find"><svg width="20" height="20" v-html="icons.glass.body" /><span v-fit="205">Escribe aquí para buscar</span></div>
      <div v-for="(it, i) in apps" :key="i" class="item app" :class="it.cls" :style="it.box">
        <svg :width="icons[it.icon!].w" :height="icons[it.icon!].h" v-html="icons[it.icon!].body" />
      </div>
      <div v-for="(it, i) in tray" :key="'t' + i" class="item" :class="it.cls" :style="it.box">
        <svg v-if="it.icon" :width="icons[it.icon].w" :height="icons[it.icon].h" v-html="icons[it.icon].body" />
        <span v-else v-fit="it.w">{{ it.text }}</span>
      </div>
      <div class="clock"><span v-fit="71">04:40 p. m.</span><span v-fit="74">26/03/2021</span></div>
      <svg class="mm" width="24" height="19" v-html="icons.mm.body" />
      <div class="notif"><svg width="32" height="30" v-html="icons.notif.body" /><b>12</b></div>
      <div class="peek" />
    </footer>
  </div>
</template>

<style>
body { margin: 0; overflow: hidden; }
</style>

<style scoped>
* { box-sizing: border-box; }
.screen {
  width: 1920px; height: 1080px; display: flex; flex-direction: column; overflow: hidden;
  font: 14px/20px 'Open Sans', 'Noto Sans', sans-serif; color: #444; background: #e6e6e6; white-space: nowrap;
}
svg { display: block; flex: none; overflow: visible; }
.item { flex: none; display: flex; align-items: center; justify-content: center; }
.item > span { flex: none; }
.item:not(.combo) > span:only-child { width: 100%; }
.up1 { padding-bottom: 1px; }
.up2 { padding-bottom: 2px; }
.up8 { padding-bottom: 7px; }
.dn1 { padding-top: 1px; }
.dn2 { padding-top: 2px; }

.title {
  height: 43px; flex: none; display: flex; align-items: center; font-size: 14px; color: #fff;
  background:
    radial-gradient(circle at 1350px 26px, #25663f 0 30px, transparent 31px),
    radial-gradient(circle at 1785px 58px, #25663f 0 34px, transparent 35px),
    linear-gradient(90deg, transparent 1378px, #25663f 1378px 1735px, transparent 1755px),
    #217346;
}
.search {
  flex: none; width: 458px; height: 29px; margin-left: 78px; padding-left: 23px; display: flex; align-items: center; gap: 19px;
  background: #a0cdb3; color: #185c37;
}
.avatar { flex: none; width: 30px; height: 30px; margin-left: 13px; border-radius: 50%; background: #d13438; text-align: center; font-size: 12px; line-height: 30px; }

.tabs { height: 43px; flex: none; display: flex; background: #f3f2f1; font-size: 16px; line-height: 38px; }
.tab { flex: none; height: 36px; }
.tab.current { font-weight: 600; border-bottom: 4px solid #217346; }
.pill {
  flex: none; width: 138px; height: 30px; margin: 4px 0 0 11px; padding: 0 0 0 11px; display: flex; align-items: center; gap: 5px;
  border: 1px solid #e1dfdd; border-radius: 3px; background: #fff; color: #217346; font-weight: 600; line-height: 28px;
}
.pill.share { width: 118px; margin-left: 824px; padding-left: 9px; gap: 6px; }

.ribbon { height: 114px; flex: none; display: flex; background: #f3f2f1; border-bottom: 1px solid #cfcdcb; }
.group { flex: none; height: 109px; display: flex; flex-direction: column; border-right: 1px solid #b3b0ad; }
.body { height: 97px; flex: none; display: flex; }
.stack { flex: none; display: flex; flex-direction: column; }
.line { flex: none; display: flex; align-items: center; }
.big { flex: none; display: flex; flex-direction: column; align-items: center; }
.pic { height: 45px; display: flex; align-items: center; }
.cap { height: 20px; display: flex; align-items: center; }
.cap.off { color: #b1afad; }
.cap .cv:only-child { margin-top: -4px; }
.cap .cv.gap { margin: -5px 1px 0 4px; }
.foot { height: 12px; flex: none; display: flex; align-items: center; font-size: 12px; line-height: 14px; }
.collapse { flex: 1; display: flex; align-items: flex-end; justify-content: flex-end; padding: 0 11px 4px 0; }
.combo { height: 29px; border: 1px solid #c8c6c4; background: #fff; justify-content: space-between; padding: 0 3px 0 2px; color: #222; font-size: 14.500px; }
.combo.c2 { margin-left: -1px; padding-right: 2px; }
.on { height: 29px; background: #c8c6c4; }
.on.low { padding-top: 6px; }
.bi { font-weight: 700; font-size: 16.500px; }
.it { font-style: italic; font-size: 17px; }
.un { text-decoration: underline; text-underline-offset: 3px; font-size: 16px; }
.sym { font-size: 22px; color: #555; }
.zero { font-size: 13px; }
.dec { display: grid; font-size: 11.500px; line-height: 10px; }
.dec svg, .dec span { grid-area: 1 / 1; }
.dec span { white-space: pre; text-align: right; letter-spacing: -0.5px; }

.formula { height: 55px; flex: none; display: flex; align-items: center; background: linear-gradient(#d4d3d2, #e6e6e6 6px); font-size: 14.500px; }
.namebox { flex: none; width: 140px; height: 43px; border: 1px solid #c6c6c6; border-left: 0; display: flex; align-items: center; }
.name { width: 126px; height: 28px; margin-left: 7px; padding: 0 9px 0 6px; background: #fff; display: flex; align-items: center; justify-content: space-between; }
.fdots { margin: 0 17px 0 10px; }
.keys { flex: none; width: 137px; height: 30px; padding: 0 16px 0 14px; border: 1px solid #c6c6c6; background: #fff; display: flex; align-items: center; justify-content: space-between; }
.fx { font: italic 21px/24px 'Liberation Serif', serif; color: #444; -webkit-text-stroke: 0.4px #444; }
.fx sub { font-size: 15px; line-height: 0; vertical-align: -1px; margin-left: -1px; }
.input { flex: none; width: 1604px; height: 30px; margin-left: 3px; padding: 0 12px 0 17px; border: 1px solid #c6c6c6; background: #fff; display: flex; align-items: center; justify-content: space-between; }
.input svg { margin-top: 13px; }

.work { height: 720px; flex: none; display: flex; }
.grid {
  flex: none; display: grid; width: 1895px; height: 720px; border-bottom: 1px solid #999; background: #fff;
  grid-template-columns: 34px 231px 207px 208px 246px 207px 212px 211px 206px 104px 29px;
  grid-template-rows: 24px 45px repeat(27, 24px) 2px;
  font-family: Lato, 'Open Sans', sans-serif; font-size: 15.500px; line-height: 22px; color: #000;
}
.corner { background: #e6e6e6; border-bottom: 1px solid #999; border-right: 1px solid #bbb; display: flex; justify-content: flex-end; align-items: flex-end; padding: 0 3px 3px 0; }
.corner::after { content: ''; border-left: 16px solid transparent; border-bottom: 16px solid #b2b2b2; }
.colh { background: #e6e6e6; border-bottom: 1px solid #999; border-right: 1px solid #bbb; text-align: center; }
.colh.last { border-right: 0; }
.colh.sel { background: #d2d2d2; color: #217346; border-bottom: 2px solid #217346; }
.rowh { background: #e6e6e6; border-bottom: 1px solid #bbb; border-right: 1px solid #999; display: flex; align-items: flex-end; justify-content: center; padding-bottom: 1px; min-height: 0; }
.rowh span { margin-top: -2px; }
.rowh.cut { border-bottom: 0; padding: 0; }
.rowh.sel { background: #d2d2d2; color: #217346; border-right: 2px solid #217346; }
.cell { display: flex; align-items: center; justify-content: center; border: 0 solid #000; border-width: 0 1px 1px 0; background-color: var(--c, #fff); min-width: 0; min-height: 0; }
.lead { padding-left: 5px; }
.trail { padding-right: 3px; }
.day { align-items: flex-end; justify-content: flex-start; padding: 0 0 0 3px; }
.plain { border-color: #d4d4d4; padding: 0; }
.plain.cut { border-bottom: 0; }
.hatch { background-image: repeating-linear-gradient(45deg, #fff 0 0.707px, transparent 0.707px 2.828px); }
.lilac { --c: #d3bffb; }
.sky { --c: #bdd7ee; }
.orange { --c: #f4b084; }
.violet { --c: #c086c8; }
.yellow { --c: #ffe699; }
.indigo { --c: #8b82c4; }
.rose { --c: #c78686; }
.amber { --c: #f8c380; }
.pink { --c: #eec6fa; }
.coral { --c: #fac5bc; }
.peri { --c: #c3c3fa; }
.cursor { position: relative; margin: -2px -1px -1px -2px; border: 2px solid #217346; box-shadow: inset 0 0 0 1px #fff; }
.cursor i { position: absolute; right: -4px; bottom: -4px; width: 5px; height: 5px; background: #217346; border: solid #fff; border-width: 1px 0 0 1px; box-sizing: content-box; }
.vscroll { flex: none; width: 19px; margin: 2px 0 0 3px; height: 718px; display: flex; flex-direction: column; }
.vb { flex: none; height: 18px; border: 1px solid #ababab; background: #fff; display: flex; align-items: center; justify-content: center; }
.vthumb { flex: none; height: 655px; margin-top: 1px; border: 1px solid #ababab; background: #fff; }
.vtrack { flex: 1; background: #dadada; }

.sheets { height: 29px; flex: none; display: flex; align-items: center; background: #e6e6e6; border-bottom: 1px solid #c6c6c6; font-size: 15.500px; }
.sheet { flex: none; align-self: flex-start; width: 69.500px; height: 22px; margin-top: 3px; padding-left: 12px; border-right: 1px solid #999; line-height: 15px; }
.sheet.open { width: 72px; height: 26px; margin: -1px 0 0 40px; padding-left: 12px; line-height: 21px; border: 1px solid #999; border-width: 0 1px 2px; border-bottom-color: #217346; background: #fff; color: #217346; font-weight: 700; }
.sb { height: 19px; border: 1px solid #ababab; background: #fff; }
.track { height: 19px; background: #dadada; }

.status { height: 26px; flex: none; display: flex; align-items: center; background: #f3f2f1; font-size: 12px; }
.view { height: 26px; background: #c8c6c4; padding-right: 1px; }
.gray { color: #777; }

.taskbar { height: 50px; flex: none; display: flex; align-items: center; background: #ededed; color: #111; }
.start { flex: none; width: 60px; padding-left: 20px; }
.find { flex: none; width: 430px; height: 50px; padding-left: 14px; border: 1px solid #c6c6c6; background: #fff; display: flex; align-items: center; gap: 15px; font-size: 17.500px; color: #333; }
.app { height: 50px; padding-right: 2px; border-bottom: 0 solid #00b7c3; }
.run { border-bottom-width: 3px; padding-top: 3px; }
.active { background: #f9f9f9; }
.esp { font-size: 14.500px; }
.clock { flex: none; width: 74px; margin-left: 20px; display: flex; flex-direction: column; align-items: center; line-height: 23px; font-size: 14.500px; }
.clock span { flex: none; }
.mm { margin-left: 27px; }
.notif { position: relative; flex: none; width: 32px; height: 30px; margin: 0 0 0 33px; }
.notif b { position: absolute; left: 10px; top: 10px; width: 19px; text-align: center; font-size: 13px; line-height: 18px; }
.peek { width: 1px; height: 50px; margin-left: 13px; background: #bbb; }
</style>
